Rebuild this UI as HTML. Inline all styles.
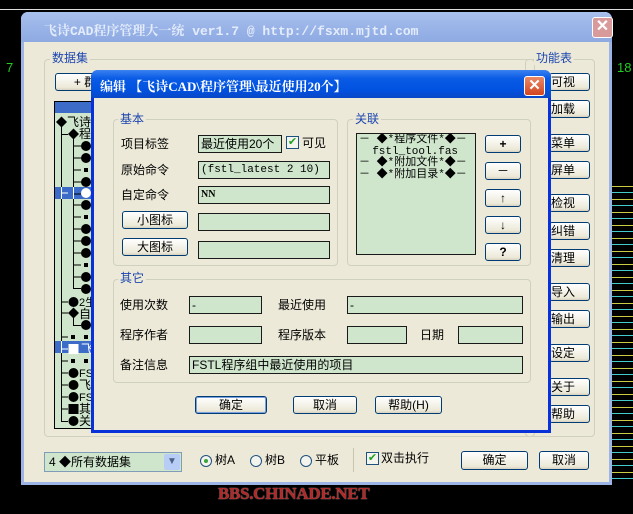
<!DOCTYPE html>
<html><head><meta charset="utf-8"><style>
*{box-sizing:border-box;margin:0;padding:0}
body{width:633px;height:514px;background:#000;position:relative;overflow:hidden;font-family:"Liberation Sans","Noto Sans CJK SC",sans-serif;font-size:12px;color:#000}
.a{position:absolute}
.btn{position:absolute;background:linear-gradient(#fff,#ece9d8 85%,#d6d0c0);border:1px solid #003c74;border-radius:3px;text-align:center;font-size:12px;line-height:16px}
.inp{position:absolute;background:#cfe6cd;border:1px solid #1a1a1a;font-size:12px;line-height:16px;padding-left:2px;white-space:nowrap;overflow:hidden}
.grp{position:absolute;border:1px solid #d0d0bf;border-radius:4px}
.gl{position:absolute;background:#ece9d8;color:#1c46b0;padding:0 2px;font-size:12px;line-height:14px}
.lab{position:absolute;font-size:12px;line-height:14px}
.mono{font-family:"Liberation Mono","Noto Sans CJK SC",monospace}
.rb{position:absolute;background:linear-gradient(#fff,#ece9d8 85%,#d6d0c0);border:1px solid #003c74;border-radius:3px;font-size:12px;line-height:16px;padding-left:1px}
</style></head><body>
<div class="a" style="left:0;top:9px;width:633px;height:1px;background:#ddd"></div>
<div class="a" style="left:6px;top:60px;color:#2c2;font-size:13px">7</div>
<div class="a" style="left:617px;top:60px;color:#2c2;font-size:13px">18</div>
<div class="a" style="left:611px;top:180px;width:22px;height:300px;background:repeating-linear-gradient(#000 0 6px,#cc4 6px 7px,#000 7px 12px,#4cc 12px 13px)"></div>

<div class="a" style="left:21px;top:12px;width:591px;height:473px;background:#ece9d8;border:3px solid #9db4e6;border-top:0;border-radius:7px 7px 0 0"></div>
<div class="a" style="left:21px;top:12px;width:591px;height:30px;background:linear-gradient(#a8c0ec,#9ab4e8 50%,#8eaae2);border-radius:7px 7px 0 0"></div>
<div class="a" style="left:44px;top:20px;color:#e4ecfb;font-size:13px;font-weight:bold;font-family:'Liberation Mono','Noto Serif CJK SC',monospace">飞诗CAD程序管理大一统 ver1.7 @ http://fsxm.mjtd.com</div>
<div class="a" style="left:592px;top:17px;width:21px;height:21px;background:#d89a9a;border:1px solid #fff;border-radius:3px;color:#fff;font-size:16px;line-height:18px;text-align:center;font-weight:bold">✕</div>

<div class="grp" style="left:44px;top:59px;width:491px;height:378px"></div>
<div class="gl" style="left:50px;top:51px">数据集</div>
<div class="grp" style="left:525px;top:59px;width:70px;height:378px"></div>
<div class="gl" style="left:534px;top:51px">功能表</div>
<div class="btn" style="left:55px;top:73px;width:60px;height:18px">+ 群</div>

<!-- tree -->
<div class="a" style="left:54px;top:101px;width:50px;height:328px;background:#cfe6cd;border:1px solid #000"></div>
<div class="a" style="left:55px;top:102px;width:49px;height:11px;background:#3d6cc8"></div>
<svg class="a" style="left:0;top:0" width="100" height="440" font-family="Liberation Sans, Noto Sans CJK SC, sans-serif" font-size="12">
<rect x="55" y="187" width="45" height="12" fill="#3d6cc8"/>
<rect x="55" y="341" width="45" height="12" fill="#3d6cc8"/>
<g stroke="#000" stroke-width="1" fill="none">
<path d="M61.5 127V421.5H68"/>
<path d="M73.5 139V288.5H81"/>
<path d="M73.5 318V325.5H81"/>
<path d="M61.5 134.5H68 M73.5 146H81 M73.5 158H81 M73.5 170H81 M73.5 182H81 M73.5 194H81 M73.5 205H81 M73.5 217H81 M73.5 229H81 M73.5 241H81 M73.5 253H81 M73.5 265H81 M73.5 277H81 M61.5 302H68 M61.5 313H68 M61.5 337H68 M61.5 349H68 M61.5 361H68 M61.5 373H68 M61.5 385H68 M61.5 397H68 M61.5 409H68"/>
</g>
<g fill="#000">
<path d="M56 122L61.5 116.5L67 122L61.5 127.5Z"/>
<path d="M68 134L73.5 128.5L79 134L73.5 139.5Z"/>
<path d="M68 313L73.5 307.5L79 313L73.5 318.5Z"/>
<circle cx="86" cy="146" r="5"/><circle cx="86" cy="158" r="5"/>
<rect x="84" y="168" width="4" height="4"/>
<circle cx="86" cy="182" r="5"/>
<circle cx="86" cy="205" r="5"/>
<rect x="84" y="215" width="4" height="4"/>
<circle cx="86" cy="229" r="5"/><circle cx="86" cy="241" r="5"/><circle cx="86" cy="253" r="5"/>
<rect x="84" y="263" width="4" height="4"/>
<circle cx="86" cy="277" r="5"/><circle cx="86" cy="289" r="5"/>
<circle cx="73.5" cy="302" r="5"/>
<circle cx="86" cy="325" r="5"/>
<rect x="71" y="335" width="4" height="4"/><rect x="84" y="335" width="4" height="4"/>
<rect x="71" y="359" width="4" height="4"/><rect x="84" y="359" width="4" height="4"/>
<circle cx="73.5" cy="373" r="5"/><circle cx="73.5" cy="385" r="5"/><circle cx="73.5" cy="397" r="5"/>
<rect x="68.5" y="404" width="10" height="10"/>
<circle cx="73.5" cy="421" r="5"/>
</g>
<circle cx="86" cy="193" r="5" fill="#fff"/>
<path d="M73.5 187V199 M61.5 187V199" stroke="#fff"/>
<path d="M61.5 193H68" stroke="#fff"/>
<rect x="68.5" y="344" width="10" height="10" fill="#fff"/>
<path d="M61.5 341V353 M61.5 349H68" stroke="#fff"/>
<text x="67" y="126">飞诗</text>
<text x="79" y="138">程</text>
<text x="79" y="306" font-size="11">2生</text>
<text x="79" y="318">自</text>
<text x="81" y="353" fill="#fff">飞</text>
<text x="79" y="377" font-size="11">FS</text>
<text x="79" y="389">飞</text>
<text x="79" y="401" font-size="11">FS</text>
<text x="79" y="413">其</text>
<text x="79" y="425">关</text>
</svg>

<div class="rb" style="left:549px;top:73px;width:41px;height:18px">可视</div>
<div class="rb" style="left:549px;top:100px;width:41px;height:18px">加载</div>
<div class="rb" style="left:549px;top:134px;width:41px;height:18px">菜单</div>
<div class="rb" style="left:549px;top:161px;width:41px;height:18px">屏单</div>
<div class="rb" style="left:549px;top:194px;width:41px;height:18px">检视</div>
<div class="rb" style="left:549px;top:222px;width:41px;height:18px">纠错</div>
<div class="rb" style="left:549px;top:249px;width:41px;height:18px">清理</div>
<div class="rb" style="left:549px;top:283px;width:41px;height:18px">导入</div>
<div class="rb" style="left:549px;top:310px;width:41px;height:18px">输出</div>
<div class="rb" style="left:549px;top:344px;width:41px;height:18px">设定</div>
<div class="rb" style="left:549px;top:378px;width:41px;height:18px">关于</div>
<div class="rb" style="left:549px;top:405px;width:41px;height:18px">帮助</div>

<div class="a" style="left:44px;top:452px;width:138px;height:20px;background:#cfe6cd;border:1px solid #7f9db9;font-size:12px;line-height:18px;padding-left:4px">4 ◆所有数据集</div>
<div class="a" style="left:164px;top:454px;width:16px;height:16px;background:#b8cdf5;border-radius:2px;color:#4d6185;font-size:10px;text-align:center;line-height:16px">▼</div>
<div class="a" style="left:200px;top:455px;width:12px;height:12px;border:1px solid #1c5180;border-radius:50%;background:#f4f4ee"></div>
<div class="a" style="left:204px;top:459px;width:4px;height:4px;border-radius:50%;background:#3aa33a"></div>
<div class="lab" style="left:215px;top:453px">树A</div>
<div class="a" style="left:250px;top:455px;width:12px;height:12px;border:1px solid #1c5180;border-radius:50%;background:#f4f4ee"></div>
<div class="lab" style="left:265px;top:453px">树B</div>
<div class="a" style="left:300px;top:455px;width:12px;height:12px;border:1px solid #1c5180;border-radius:50%;background:#f4f4ee"></div>
<div class="lab" style="left:315px;top:453px">平板</div>
<div class="a" style="left:353px;top:448px;width:1px;height:24px;background:#c8c4b0"></div>
<div class="a" style="left:366px;top:452px;width:13px;height:13px;border:1px solid #1c5180;background:#f4f4ee;color:#21a121;font-size:11px;line-height:11px;text-align:center">✔</div>
<div class="lab" style="left:381px;top:451px">双击执行</div>
<div class="btn" style="left:461px;top:451px;width:67px;height:19px">确定</div>
<div class="btn" style="left:539px;top:451px;width:50px;height:19px">取消</div>

<div class="a" style="left:218px;top:484px;color:#b02828;font-family:'Liberation Serif',serif;font-weight:bold;font-size:17px;letter-spacing:-0.3px;text-shadow:0 0 1px #fcc">BBS.CHINADE.NET</div>

<div class="a" style="left:91px;top:70px;width:460px;height:363px;background:#ece9d8;border:3px solid #0831d9;border-top:0;border-radius:7px 7px 0 0"></div>
<div class="a" style="left:91px;top:70px;width:460px;height:28px;background:linear-gradient(#3b82f0,#0a5ce6 30%,#0052e0 70%,#0a48c8);border-radius:7px 7px 0 0"></div>
<div class="a" style="left:100px;top:76px;color:#fff;font-weight:bold;font-size:13px;font-family:'Liberation Serif','Noto Serif CJK SC',serif">编辑 【飞诗CAD\程序管理\最近使用20个】</div>
<div class="a" style="left:524px;top:76px;width:21px;height:20px;background:linear-gradient(#e88a68,#d2451f);border:1px solid #fff;border-radius:3px;color:#fff;font-size:15px;line-height:18px;text-align:center;font-weight:bold">✕</div>

<div class="grp" style="left:113px;top:119px;width:225px;height:147px"></div>
<div class="gl" style="left:118px;top:112px">基本</div>
<div class="grp" style="left:347px;top:119px;width:184px;height:147px"></div>
<div class="gl" style="left:353px;top:112px">关联</div>

<div class="lab" style="left:121px;top:137px">项目标签</div>
<div class="inp" style="left:198px;top:135px;width:84px;height:18px">最近使用20个</div>
<div class="a" style="left:286px;top:136px;width:13px;height:13px;border:1px solid #1c5180;background:#f4f4ee;color:#21a121;font-size:11px;line-height:11px;text-align:center">✔</div>
<div class="lab" style="left:302px;top:136px">可见</div>
<div class="lab" style="left:121px;top:163px">原始命令</div>
<div class="inp mono" style="left:198px;top:161px;width:132px;height:18px;font-size:11px">(fstl_latest 2 10)</div>
<div class="lab" style="left:121px;top:188px">自定命令</div>
<div class="inp" style="left:198px;top:186px;width:132px;height:18px;font-size:10px;font-family:'Liberation Serif',serif;font-weight:bold">NN</div>
<div class="btn" style="left:122px;top:211px;width:66px;height:18px">小图标</div>
<div class="inp" style="left:198px;top:213px;width:132px;height:18px"></div>
<div class="btn" style="left:122px;top:238px;width:66px;height:18px">大图标</div>
<div class="inp" style="left:198px;top:241px;width:132px;height:18px"></div>

<div class="inp mono" style="left:356px;top:133px;width:120px;height:122px;font-size:11px;line-height:11.5px;padding:1px 0 0 2px;white-space:pre">－ ◆*程序文件*◆－
  fstl_tool.fas
－ ◆*附加文件*◆－
－ ◆*附加目录*◆－</div>
<div class="btn" style="left:485px;top:135px;width:36px;height:18px;font-weight:bold">+</div>
<div class="btn" style="left:485px;top:162px;width:36px;height:18px">－</div>
<div class="btn" style="left:485px;top:189px;width:36px;height:18px">↑</div>
<div class="btn" style="left:485px;top:216px;width:36px;height:18px">↓</div>
<div class="btn" style="left:485px;top:243px;width:36px;height:18px;font-weight:bold">?</div>

<div class="grp" style="left:113px;top:279px;width:418px;height:104px"></div>
<div class="gl" style="left:118px;top:271px">其它</div>
<div class="lab" style="left:120px;top:298px">使用次数</div>
<div class="inp" style="left:189px;top:296px;width:73px;height:18px">-</div>
<div class="lab" style="left:278px;top:298px">最近使用</div>
<div class="inp" style="left:347px;top:296px;width:176px;height:18px">-</div>
<div class="lab" style="left:120px;top:328px">程序作者</div>
<div class="inp" style="left:189px;top:326px;width:73px;height:18px"></div>
<div class="lab" style="left:278px;top:328px">程序版本</div>
<div class="inp" style="left:347px;top:326px;width:60px;height:18px"></div>
<div class="lab" style="left:420px;top:328px">日期</div>
<div class="inp" style="left:458px;top:326px;width:65px;height:18px"></div>
<div class="lab" style="left:120px;top:358px">备注信息</div>
<div class="inp" style="left:189px;top:356px;width:334px;height:18px">FSTL程序组中最近使用的项目</div>

<div class="btn" style="left:195px;top:396px;width:72px;height:18px;box-shadow:inset 0 0 0 1px #7aa0e0">确定</div>
<div class="btn" style="left:293px;top:396px;width:64px;height:18px">取消</div>
<div class="btn" style="left:375px;top:396px;width:67px;height:18px">帮助(H)</div>
</body></html>
